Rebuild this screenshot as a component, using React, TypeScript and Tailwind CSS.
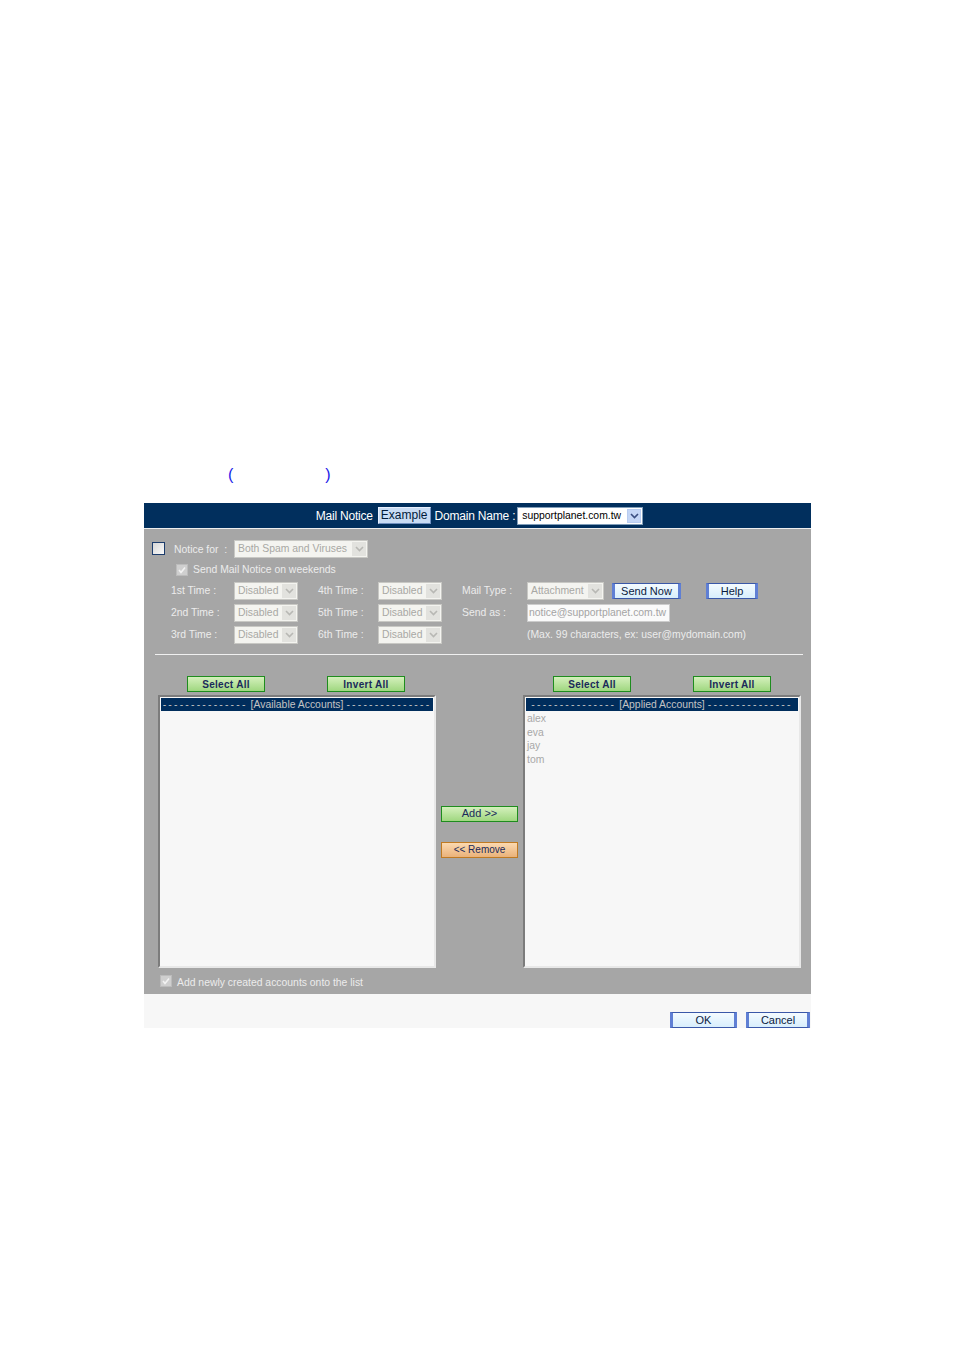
import React from "react"

const font = { fontFamily: '"Liberation Sans", Arial, sans-serif' }

function Chevron({ color = "#b8b8b4" }: { color?: string }) {
  return (
    <svg width="9" height="6" viewBox="0 0 9 6">
      <path d="M1 1 L4.5 4.5 L8 1" fill="none" stroke={color} strokeWidth="1.6" />
    </svg>
  )
}

function DisabledSelect({ value, width }: { value: string; width: string }) {
  return (
    <div className={`flex h-[18px] ${width} items-stretch border border-[#c8c8c4] bg-[#f4f4f0]`}>
      <span className="flex-1 overflow-hidden whitespace-nowrap pl-[3px] text-[10.4px] leading-[16px] text-[#a8a8a4]">{value}</span>
      <span className="m-[1px] flex w-[14px] items-center justify-center bg-[#e2e2de]">
        <Chevron />
      </span>
    </div>
  )
}

function BlueButton({ label, width }: { label: string; width: string }) {
  return (
    <button
      className={`h-[16px] ${width} border-y border-y-[#3a58a8] border-x-[3px] border-x-[#5f7fd4] bg-gradient-to-b from-[#f4fbff] to-[#d8eefc] text-[11px] leading-[13px] text-[#0a1a40]`}
    >
      {label}
    </button>
  )
}

function GreenButton({ label, width, bold = true }: { label: string; width: string; bold?: boolean }) {
  return (
    <button
      className={`h-[16px] ${width} border border-[#1e8c1e] bg-gradient-to-b from-[#d4f0bc] to-[#9fd77f] leading-[13px] text-[#1a2a5a] ${
        bold ? "text-[10px] font-bold tracking-[0.3px]" : "text-[11px]"
      }`}
    >
      {label}
    </button>
  )
}

function CheckBox({ disabled }: { disabled?: boolean }) {
  if (disabled) {
    return (
      <span className="flex h-[12px] w-[12px] items-center justify-center border border-[#bcbcbc] bg-[#cfcfcf]">
        <svg width="8" height="8" viewBox="0 0 8 8">
          <path d="M1 4 L3 6.5 L7 1.5" fill="none" stroke="#f2f2f2" strokeWidth="1.6" />
        </svg>
      </span>
    )
  }
  return <span className="h-[13px] w-[13px] border border-[#1c3c6c] bg-gradient-to-br from-[#d6d6d6] to-[#fafafa]" />
}

function ListBox({ title, items }: { title: string; items: string[] }) {
  return (
    <div className="h-[273px] w-[278px] border-2 border-t-[#7c7c7c] border-l-[#7c7c7c] border-r-[#e8e8e8] border-b-[#e8e8e8] bg-[#f7f7f7] p-[1px]">
      <div className="flex h-[13px] items-center justify-center overflow-hidden whitespace-nowrap bg-[#002d5c] text-[10.4px] leading-[13px] text-[#c4c4c4]">
        <span className="tracking-[2.2px]">---------------</span>
        <span className="mx-[3px]">[{title}]</span>
        <span className="tracking-[2.2px]">---------------</span>
      </div>
      <div className="pt-[1px] pl-[1px]">
        {items.map((it) => (
          <div key={it} className="h-[13.5px] text-[10.4px] leading-[13.5px] text-[#a8a8a8]">
            {it}
          </div>
        ))}
      </div>
    </div>
  )
}

export default function App() {
  return (
    <div className="min-h-[1350px] bg-white pt-[465px]" style={font}>
      <div className="flex h-[20px] items-center pl-[228px] text-[16px] text-[#2020e8]">
        <span>(</span>
        <span className="ml-[92px]">)</span>
      </div>

      <div className="ml-[144px] mt-[18px] w-[667px]">
        {/* header */}
        <div className="flex h-[25px] items-center justify-center bg-[#012f5d] pl-[4px] text-[12px] text-white">
          <span className="tracking-[-0.2px]">Mail Notice</span>
          <span className="ml-[5px] h-[17px] border border-t-[#e8f0ff] border-l-[#e8f0ff] border-r-[#7090c0] border-b-[#7090c0] bg-[#c9dcf4] px-[2px] leading-[15px] text-[#001a3a]">
            Example
          </span>
          <span className="ml-[4px] tracking-[-0.2px]">Domain Name :</span>
          <span className="ml-[2px] flex h-[18px] w-[126px] items-stretch border border-[#7f9db9] bg-white">
            <span className="flex-1 whitespace-nowrap pl-[4px] text-[10.4px] leading-[16px] text-black">supportplanet.com.tw</span>
            <span className="m-[1px] flex w-[14px] items-center justify-center border border-[#b8ccf0] bg-[#c4d6f6]">
              <Chevron color="#3a4e80" />
            </span>
          </span>
        </div>
        <div className="h-[1px] bg-[#eeeeee]" />

        {/* body */}
        <div className="bg-[#a6a6a6] pt-[8px] text-[10.4px] text-[#ececec]">
          <div className="flex h-[23px] items-center pl-[8px]">
            <CheckBox />
            <span className="ml-[9px] w-[60px] pt-[3px]">Notice for&nbsp;&nbsp;:</span>
            <DisabledSelect value="Both Spam and Viruses" width="w-[134px]" />
          </div>
          <div className="flex h-[20px] items-center pl-[32px]">
            <CheckBox disabled />
            <span className="ml-[5px]">Send Mail Notice on weekends</span>
          </div>

          <div className="flex h-[22px] items-center pl-[27px]">
            <span className="w-[63px]">1st Time :</span>
            <DisabledSelect value="Disabled" width="w-[64px]" />
            <span className="ml-[20px] w-[60px]">4th Time :</span>
            <DisabledSelect value="Disabled" width="w-[64px]" />
            <span className="ml-[20px] w-[65px]">Mail Type :</span>
            <DisabledSelect value="Attachment" width="w-[77px]" />
            <span className="ml-[8px] flex">
              <BlueButton label="Send Now" width="w-[69px]" />
            </span>
            <span className="ml-[25px] flex">
              <BlueButton label="Help" width="w-[52px]" />
            </span>
          </div>
          <div className="flex h-[22px] items-center pl-[27px]">
            <span className="w-[63px]">2nd Time :</span>
            <DisabledSelect value="Disabled" width="w-[64px]" />
            <span className="ml-[20px] w-[60px]">5th Time :</span>
            <DisabledSelect value="Disabled" width="w-[64px]" />
            <span className="ml-[20px] w-[65px]">Send as :</span>
            <div className="h-[18px] w-[143px] border border-[#cccccc] bg-[#fafafa] pl-[1px] leading-[16px] whitespace-nowrap text-[#a4a4a4]">
              notice@supportplanet.com.tw
            </div>
          </div>
          <div className="flex h-[22px] items-center pl-[27px]">
            <span className="w-[63px]">3rd Time :</span>
            <DisabledSelect value="Disabled" width="w-[64px]" />
            <span className="ml-[20px] w-[60px]">6th Time :</span>
            <DisabledSelect value="Disabled" width="w-[64px]" />
            <span className="ml-[85px]">(Max. 99 characters, ex: user@mydomain.com)</span>
          </div>

          <div className="ml-[11px] mt-[8px] h-[1px] w-[648px] bg-[#f0f0f0]" />

          <div className="mt-[21px] flex items-start pl-[14px]">
            <div className="flex flex-col">
              <div className="flex justify-between pl-[29px] pr-[31px]">
                <GreenButton label="Select All" width="w-[78px]" />
                <GreenButton label="Invert All" width="w-[78px]" />
              </div>
              <div className="mt-[3px]">
                <ListBox title="Available Accounts" items={[]} />
              </div>
            </div>

            <div className="flex h-[292px] w-[87px] flex-col items-center justify-center gap-[20px] pt-[19px]">
              <GreenButton label="Add  >>" width="w-[77px]" bold={false} />
              <button className="h-[16px] w-[77px] border border-[#c07a22] bg-gradient-to-b from-[#fbd9b0] to-[#eab27a] text-[10px] leading-[13px] text-[#1a2a5a]">
                &lt;&lt; Remove
              </button>
            </div>

            <div className="flex flex-col">
              <div className="flex justify-between px-[30px]">
                <GreenButton label="Select All" width="w-[78px]" />
                <GreenButton label="Invert All" width="w-[78px]" />
              </div>
              <div className="mt-[3px]">
                <ListBox title="Applied Accounts" items={["alex", "eva", "jay", "tom"]} />
              </div>
            </div>
          </div>

          <div className="flex h-[26px] items-center pl-[16px]">
            <CheckBox disabled />
            <span className="ml-[5px] pt-[3px]">Add newly created accounts onto the list</span>
          </div>
        </div>

        {/* footer */}
        <div className="flex h-[34px] items-end justify-end gap-[9px] bg-[#f7f7f7] pr-[1px]">
          <BlueButton label="OK" width="w-[67px]" />
          <BlueButton label="Cancel" width="w-[64px]" />
        </div>
      </div>
    </div>
  )
}
